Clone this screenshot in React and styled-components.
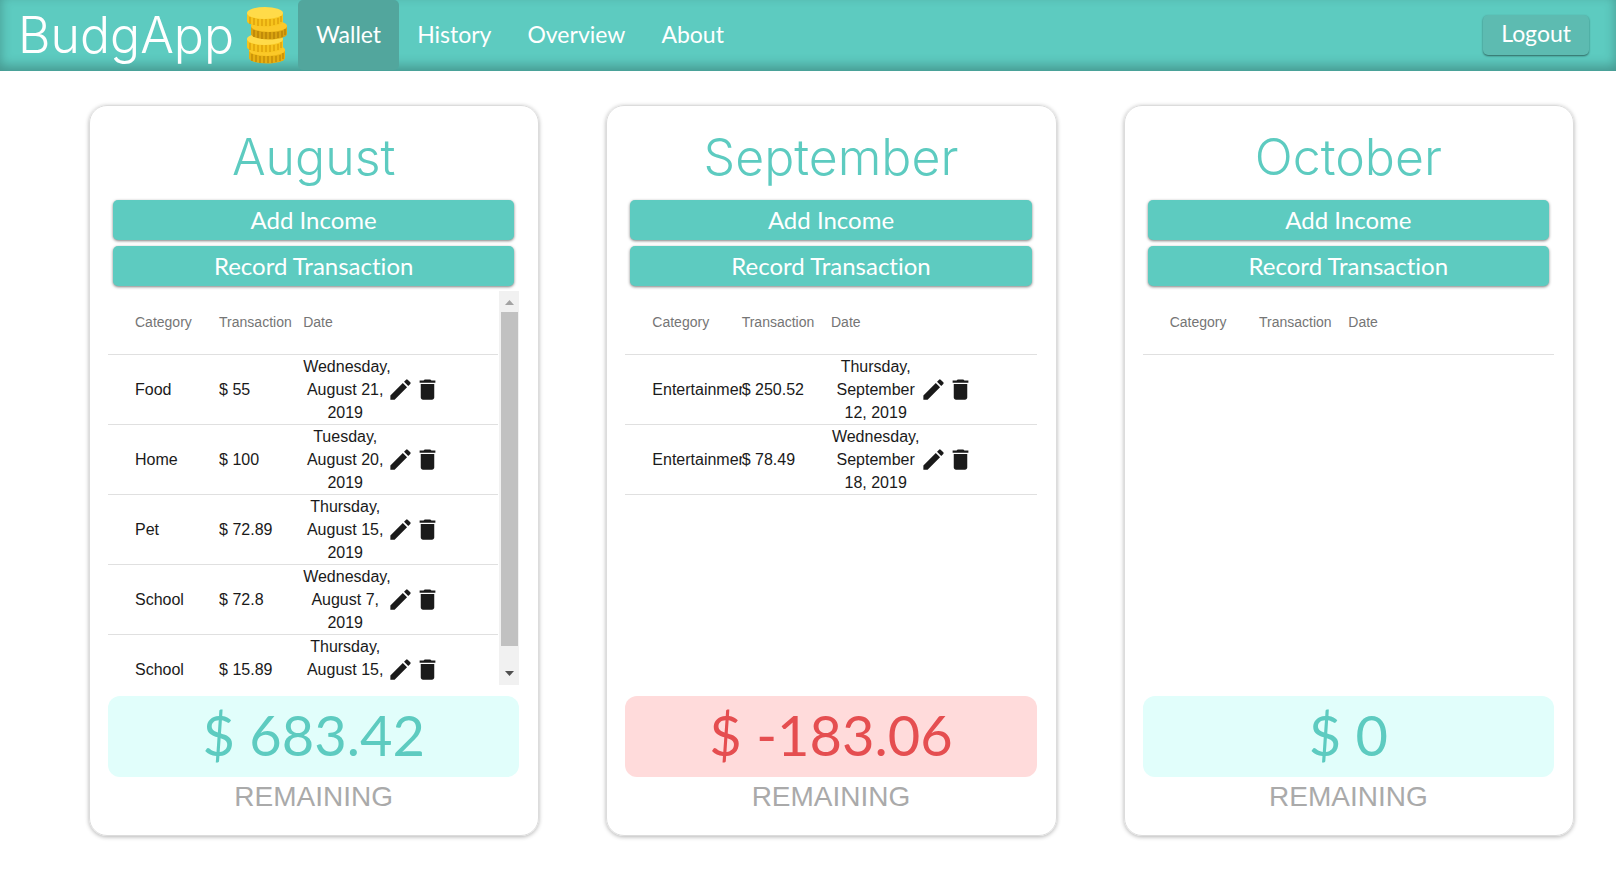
import React from 'react';
import styled, { createGlobalStyle } from 'styled-components';
import { MdCreate, MdDelete } from 'react-icons/md';

const teal = '#5dcbc0';
const rounded = "Lato, 'Open Sans', sans-serif";
const display = "Inter, 'Open Sans', sans-serif";
const plain = "'Liberation Sans', Arial, sans-serif";

const GlobalStyle = createGlobalStyle`
  *, *::before, *::after { box-sizing: border-box; }
  body { margin: 0; background: #fff; font-family: ${plain}; font-size: 16px; color: #1a1a1a; }
  button { font: inherit; border: 0; padding: 0; cursor: pointer; }
`;

const NavBar = styled.header`
  display: flex;
  align-items: center;
  height: 71px;
  padding: 0 27px 1px 18px;
  background: ${teal};
  box-shadow: inset 0 -5px 12px rgba(0, 0, 0, 0.26);
  font-family: ${rounded};
  color: #fff;
`;

const Brand = styled.a`
  display: flex;
  align-items: center;
  width: 280px;
  color: inherit;
  font-family: ${display};
  font-size: 50px;
  font-weight: 300;
  line-height: 68px;
  text-decoration: none;
`;

const CoinArt = styled.svg`
  flex: none;
  margin-left: auto;
  margin-right: 10px;
`;

const Links = styled.nav`
  display: flex;
`;

const NavLink = styled.a`
  height: 70px;
  padding: 0 18px;
  border-radius: 5px;
  background: ${({ $active }) => ($active ? '#52a69d' : 'transparent')};
  color: inherit;
  font-size: 23px;
  line-height: 68px;
  text-decoration: none;
`;

const LogoutButton = styled.button`
  height: 40px;
  margin-left: auto;
  padding: 0 18px 4px;
  border-radius: 5px;
  background: #5dbbb1;
  box-shadow: 0 1px 2px rgba(0, 0, 0, 0.5);
  color: #fff;
  font-size: 23px;
`;

const Wallet = styled.main`
  display: grid;
  grid-template-columns: repeat(3, minmax(0, 1fr));
  gap: 67px;
  padding: 34px 42px 42px 89px;
`;

const Card = styled.section`
  display: flex;
  flex-direction: column;
  padding: 18px 19px 18px 18px;
  border: 1px solid #dcdcdc;
  border-radius: 18px;
  box-shadow: 0 1px 4px rgba(0, 0, 0, 0.3);
`;

const Month = styled.h2`
  margin: 0;
  color: ${teal};
  font-family: ${display};
  font-size: 50px;
  font-weight: 300;
  line-height: 66px;
  text-align: center;
`;

const Actions = styled.div`
  display: grid;
  gap: 6px;
  padding: 10px 5px 5px;
`;

const ActionButton = styled.button`
  height: 40px;
  padding-bottom: 2px;
  border-radius: 5px;
  background: ${teal};
  box-shadow: 0 1px 3px rgba(0, 0, 0, 0.5);
  color: #fff;
  font-family: ${rounded};
  font-size: 24px;
  font-variant-ligatures: none;
`;

const Ledger = styled.div`
  display: flex;
  gap: 1px;
  height: 394px;
`;

const LedgerScroll = styled.div`
  flex: 1;
  min-width: 0;
  overflow-y: auto;
  scrollbar-width: none;
`;

const Table = styled.table`
  display: block;
  thead, tbody { display: block; }
`;

const Row = styled.tr`
  display: grid;
  grid-template-columns: repeat(4, minmax(0, 1fr));
  align-items: center;
  min-height: ${({ $head }) => ($head ? '64px' : '70px')};
  padding: 0 27px;
  border-bottom: 1px solid #e0e0e0;
`;

const HeadCell = styled.th`
  padding: 0 0 2px;
  color: #757575;
  font-size: 14px;
  font-weight: 400;
  text-align: left;
`;

const Cell = styled.td`
  overflow: hidden;
  padding: 0;
  line-height: 23px;
`;

const DateCell = styled.td`
  padding: 0;
  line-height: 23px;
  text-align: center;
`;

const Tools = styled.td`
  display: flex;
  padding: 0;
`;

const IconButton = styled.button`
  display: flex;
  background: none;
  color: #1a1a1a;
`;

const Track = styled.div`
  display: flex;
  flex-direction: column;
  align-items: center;
  width: 20px;
  background: #f1f1f1;
`;

const Thumb = styled.div`
  flex: 1;
  width: 17px;
  margin-bottom: 18px;
  background: #c1c1c1;
`;

const Arrow = styled.svg`
  display: block;
  flex: none;
`;

const Balance = styled.div`
  margin-top: 11px;
  padding-bottom: 4px;
  border-radius: 12px;
  background: ${({ $negative }) => ($negative ? '#ffdbdb' : '#e1fefb')};
  color: ${({ $negative }) => ($negative ? '#e54e50' : teal)};
  font-family: ${rounded};
  font-size: 56px;
  line-height: 77px;
  text-align: center;
`;

const Remaining = styled.p`
  margin: 0;
  color: #aaa;
  font-size: 28px;
  line-height: 40px;
  text-align: center;
`;

const months = [
  {
    name: 'August',
    balance: '683.42',
    scrolls: true,
    rows: [
      ['Food', '55', 'Wednesday, August 21, 2019'],
      ['Home', '100', 'Tuesday, August 20, 2019'],
      ['Pet', '72.89', 'Thursday, August 15, 2019'],
      ['School', '72.8', 'Wednesday, August 7, 2019'],
      ['School', '15.89', 'Thursday, August 15, 2019'],
    ],
  },
  {
    name: 'September',
    balance: '-183.06',
    rows: [
      ['Entertainment', '250.52', 'Thursday, September 12, 2019'],
      ['Entertainment', '78.49', 'Wednesday, September 18, 2019'],
    ],
  },
  { name: 'October', balance: '0', rows: [] },
];

function Coin({ x, y, top, side, groove }) {
  return (
    <g transform={`translate(${x} ${y})`}>
      <path d="M0 6v8c0 3 8 5.500 18 5.500s18-2.500 18-5.500V6z" fill={side} />
      <path
        d="M3 10v7M7 11v7M11 12v7M15 12v7M19 12v7M23 12v7M27 12v6M31 11v6M34 9v6"
        stroke={groove}
        strokeWidth="1.500"
      />
      <ellipse cx="18" cy="6" rx="18" ry="6" fill={top} />
    </g>
  );
}

function Coins() {
  return (
    <CoinArt width="41" height="57" viewBox="0 0 41 57" aria-hidden="true">
      <Coin x={2} y={37} top="#fbc828" side="#e8b010" groove="#c48d08" />
      <Coin x={0} y={26} top="#ffdb49" side="#f7c41c" groove="#dfa30b" />
      <Coin x={4} y={13} top="#fbc828" side="#d9a30f" groove="#b98408" />
      <Coin x={0} y={0} top="#ffdb49" side="#f7c41c" groove="#dfa30b" />
    </CoinArt>
  );
}

function ScrollBar() {
  return (
    <Track aria-hidden="true">
      <Arrow width="20" height="21" viewBox="0 0 20 21">
        <path d="M6 14l4.500-5L15 14z" fill="#a3a3a3" />
      </Arrow>
      <Thumb />
      <Arrow width="20" height="21" viewBox="0 0 20 21">
        <path d="M6 7l4.500 5L15 7z" fill="#505050" />
      </Arrow>
    </Track>
  );
}

function MonthCard({ name, balance, rows, scrolls }) {
  return (
    <Card>
      <Month>{name}</Month>
      <Actions>
        <ActionButton type="button">Add Income</ActionButton>
        <ActionButton type="button">Record Transaction</ActionButton>
      </Actions>
      <Ledger>
        <LedgerScroll>
          <Table>
            <thead>
              <Row $head>
                <HeadCell scope="col">Category</HeadCell>
                <HeadCell scope="col">Transaction</HeadCell>
                <HeadCell scope="col">Date</HeadCell>
              </Row>
            </thead>
            <tbody>
              {rows.map(([category, amount, date]) => (
                <Row key={category + amount}>
                  <Cell>{category}</Cell>
                  <Cell>$ {amount}</Cell>
                  <DateCell>{date}</DateCell>
                  <Tools>
                    <IconButton type="button" aria-label="Edit">
                      <MdCreate size={27} />
                    </IconButton>
                    <IconButton type="button" aria-label="Delete">
                      <MdDelete size={27} />
                    </IconButton>
                  </Tools>
                </Row>
              ))}
            </tbody>
          </Table>
        </LedgerScroll>
        {scrolls && <ScrollBar />}
      </Ledger>
      <Balance $negative={Number(balance) < 0}>$ {balance}</Balance>
      <Remaining>REMAINING</Remaining>
    </Card>
  );
}

export default function App() {
  return (
    <>
      <GlobalStyle />
      <NavBar>
        <Brand href="#">
          BudgApp
          <Coins />
        </Brand>
        <Links>
          <NavLink href="#wallet" $active>Wallet</NavLink>
          <NavLink href="#history">History</NavLink>
          <NavLink href="#overview">Overview</NavLink>
          <NavLink href="#about">About</NavLink>
        </Links>
        <LogoutButton type="button">Logout</LogoutButton>
      </NavBar>
      <Wallet>
        {months.map((month) => (
          <MonthCard key={month.name} {...month} />
        ))}
      </Wallet>
    </>
  );
}
